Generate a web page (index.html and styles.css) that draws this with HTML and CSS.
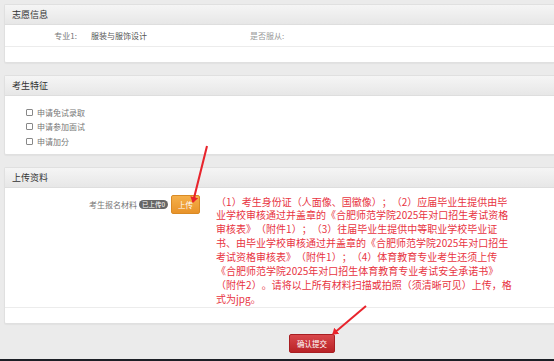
FILE: index.html
```html
<!DOCTYPE html>
<html lang="zh-CN">
<head>
  <meta charset="UTF-8">
  <title>志愿信息</title>
  <link rel="stylesheet" href="styles.css">
</head>
<body>
  <div class="page">
    <div class="panel">
      <div class="panel-head">志愿信息</div>
      <div class="panel-body">
        <div class="info-row">
          <span class="info-label">专业1:</span>
          <span class="info-value">服装与服饰设计</span>
          <span class="info-muted">是否服从:</span>
        </div>
        <div class="panel-foot"></div>
      </div>
    </div>

    <div class="panel">
      <div class="panel-head">考生特征</div>
      <div class="panel-body checks">
        <label class="check"><input type="checkbox"> 申请免试录取</label>
        <label class="check"><input type="checkbox"> 申请参加面试</label>
        <label class="check"><input type="checkbox"> 申请加分</label>
      </div>
    </div>

    <div class="panel">
      <div class="panel-head">上传资料</div>
      <div class="panel-body">
        <div class="upload-row">
          <div class="upload-ctrl">
            <span class="upload-label">考生报名材料</span>
            <span class="badge">已上传0</span>
            <button class="btn btn-upload">上传</button>
          </div>
          <p class="notice">（1）考生身份证（人面像、国徽像）；（2）应届毕业生提供由毕业学校审核通过并盖章的《合肥师范学院2025年对口招生考试资格审核表》（附件1）；（3）往届毕业生提供中等职业学校毕业证书、由毕业学校审核通过并盖章的《合肥师范学院2025年对口招生考试资格审核表》（附件1）；（4）体育教育专业考生还须上传《合肥师范学院2025年对口招生体育教育专业考试安全承诺书》（附件2）。请将以上所有材料扫描或拍照（须清晰可见）上传，格式为jpg。</p>
        </div>
        <div class="panel-foot"></div>
      </div>
    </div>

    <div class="actions">
      <button class="btn btn-submit">确认提交</button>
    </div>
  </div>
  <div class="taskbar"></div>

  <!-- annotation arrows -->
  <svg class="arrows" width="554" height="361" viewBox="0 0 554 361">
    <defs>
      <marker id="head" markerWidth="6" markerHeight="8" refX="5" refY="4" orient="auto" markerUnits="userSpaceOnUse">
        <path d="M0,0 L6,4 L0,8 Z" fill="#e8242c"/>
      </marker>
    </defs>
    <line x1="207" y1="146" x2="193" y2="202" stroke="#e8242c" stroke-width="2" marker-end="url(#head)"/>
    <line x1="366" y1="306" x2="333" y2="334" stroke="#e8242c" stroke-width="2" marker-end="url(#head)"/>
  </svg>
</body>
</html>
```

FILE: styles.css
```css
body {
  margin: 0;
  background: #ebebeb;
  font-family: "Noto Sans CJK SC", "Noto Sans", sans-serif;
  font-size: 8px;
  color: #555;
  height: 361px;
  overflow: hidden;
  position: relative;
}

.page {
  padding: 4px 0 0 4px;
}

.panel {
  background: #fff;
  border: 1px solid #e0e0e0;
  border-right: none;
  border-radius: 2px 0 0 2px;
  margin-bottom: 12px;
  box-shadow: 0 1px 1px rgba(0,0,0,0.04);
}

.panel-head {
  height: 19px;
  line-height: 19px;
  padding-left: 7px;
  font-size: 9px;
  color: #333;
  background: linear-gradient(#f5f5f5, #e7e7e7);
  border-bottom: 1px solid #dedede;
}

.panel-foot {
  height: 15px;
  border-top: 1px solid #ececec;
}

/* 志愿信息 */
.info-row {
  display: flex;
  height: 21px;
  line-height: 22px;
}

.info-label {
  width: 72px;
  text-align: right;
  color: #777;
}

.info-value {
  width: 159px;
  margin-left: 14px;
  color: #555;
}

.info-muted {
  color: #999;
}

/* 考生特征 */
.checks {
  padding: 9px 0 5px 21px;
}

.check {
  display: flex;
  align-items: center;
  height: 14.5px;
  color: #777;
}

.check input {
  appearance: none;
  width: 7px;
  height: 7px;
  margin: 0 4px 0 0;
  border: 1px solid #888;
  border-radius: 1px;
  background: #fff;
}

/* 上传资料 */
.upload-row {
  display: flex;
  align-items: flex-start;
  padding: 7px 0 1px;
}

.upload-ctrl {
  display: flex;
  align-items: center;
  height: 19px;
}

.upload-label {
  width: 132px;
  text-align: right;
  color: #777;
}

.badge {
  margin-left: 2px;
  padding: 0 3px;
  height: 9px;
  line-height: 9px;
  border-radius: 5px;
  background: #666;
  color: #fff;
  font-size: 6.5px;
}

.btn {
  border: none;
  padding: 0;
  font-family: inherit;
  color: #fff;
  cursor: pointer;
}

.btn-upload {
  width: 29px;
  height: 19px;
  margin-left: 3px;
  border-radius: 2px;
  font-size: 7.5px;
  background: linear-gradient(#f5b04a, #e8932a);
  border: 1px solid #d98a25;
}

.notice {
  margin: 0 0 0 16px;
  width: 297px;
  font-size: 10px;
  line-height: 13.9px;
  color: #e8343f;
  text-spacing-trim: space-all;
}

/* 提交 */
.actions {
  padding: 0 0 0 285px;
  margin-top: -2px;
}

.btn-submit {
  width: 46px;
  height: 19px;
  border-radius: 2px;
  font-size: 7.5px;
  background: linear-gradient(#d9474b, #b82226);
  border: 1px solid #a81e22;
}

.taskbar {
  position: absolute;
  left: 0;
  right: 0;
  bottom: 0;
  height: 2px;
  background: #1c1f26;
}

.arrows {
  position: absolute;
  left: 0;
  top: 0;
  pointer-events: none;
}
```
